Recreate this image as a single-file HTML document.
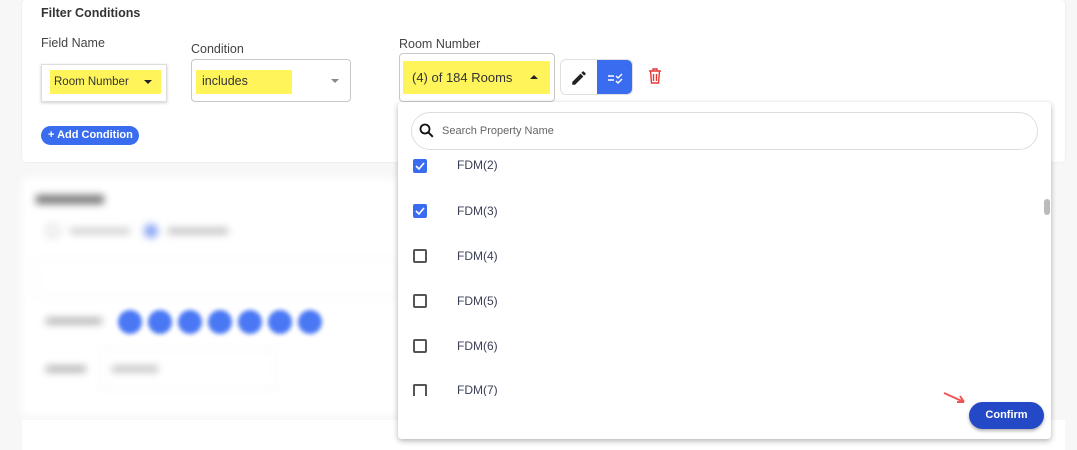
<!DOCTYPE html>
<html><head><style>
*{box-sizing:border-box;margin:0;padding:0}
html,body{width:1077px;height:441px}
body{background:#f7f7f8;font-family:"Liberation Sans",sans-serif;position:relative;overflow:hidden;color:#333}
.abs{position:absolute}
.card{background:#fff;border-radius:4px;box-shadow:0 0 2px rgba(0,0,0,.08)}
.lbl{font-size:12.5px;color:#444}
.sel{border:1px solid #c8c8c8;border-radius:4px;background:#fff}
.yel{background:#fff55a}
.cb{width:14px;height:14px;border-radius:2px}
.on{background:#3a6cf0}
.off{border:2px solid #555}
.item{font-size:12px;color:#3a3f55}
</style></head><body>
<div class="abs card" style="left:22px;top:0;width:1043px;height:162px"></div>
<div class="abs" style="left:41px;top:6px;font-size:12.5px;font-weight:bold;color:#333">Filter Conditions</div>
<div class="abs lbl" style="left:41px;top:36px">Field Name</div>
<div class="abs lbl" style="left:191px;top:42px">Condition</div>
<div class="abs lbl" style="left:399px;top:37px">Room Number</div>
<div class="abs" style="left:41px;top:64px;width:126px;height:38px;background:#fff;border:1px solid #ddd;box-shadow:0 1px 3px rgba(0,0,0,.2)"></div>
<div class="abs yel" style="left:50px;top:70px;width:111px;height:24px;font-size:11.5px;padding:6px 4px;color:#333">Room Number <span style="position:absolute;right:9px;top:10px;border:4px solid transparent;border-top:4px solid #222;border-bottom:0"></span></div>
<div class="abs sel" style="left:191px;top:59px;width:160px;height:43px"></div>
<div class="abs yel" style="left:196px;top:70px;width:96px;height:24px;font-size:12.5px;padding:4px 6px;color:#333">includes</div>
<div class="abs" style="left:331px;top:79px;border:4px solid transparent;border-top:4px solid #888;border-bottom:0"></div>
<div class="abs sel" style="left:399px;top:53px;width:156px;height:49px"></div>
<div class="abs yel" style="left:403px;top:61px;width:147px;height:33px;font-size:13px;padding:9px 9px;color:#333">(4) of 184 Rooms<span style="position:absolute;right:12px;top:14px;border:4px solid transparent;border-bottom:4px solid #222;border-top:0"></span></div>
<div class="abs" style="left:560px;top:59px;width:73px;height:36px;border:1px solid #e0e0e0;border-radius:6px;background:#fff;overflow:hidden">
<div class="abs" style="left:36px;top:0;width:37px;height:36px;background:#3a6cf0"></div>
<svg class="abs" style="left:9px;top:9px" width="18" height="18" viewBox="0 0 24 24"><path d="M3 17.25V21h3.75L17.81 9.94l-3.75-3.75L3 17.25zM20.71 7.04a1 1 0 000-1.41l-2.34-2.34a1 1 0 00-1.41 0l-1.830 1.83 3.75 3.75 1.83-1.83z" fill="#222"/></svg>
<svg class="abs" style="left:46px;top:10px" width="18" height="16" viewBox="0 0 18 16"><path d="M1 6h6M1 10h6M9 6l2 2 4-4M9 11l2 2 4-4" stroke="#fff" stroke-width="1.4" fill="none"/></svg>
</div>
<svg class="abs" style="left:648px;top:68px" width="14" height="16" viewBox="0 0 14 16"><path d="M1 3h12M5 3V1h4v2M2.5 3l1 12h7l1-12M5.5 6v7M8.5 6v7" stroke="#e53935" stroke-width="1.4" fill="none"/></svg>
<div class="abs" style="left:41px;top:126px;width:98px;height:19px;border-radius:10px;background:#3a6cf0;color:#fff;font-size:11px;font-weight:bold;padding:3px 0 0 7px">+ Add Condition</div>

<div class="abs" style="left:22px;top:178px;width:376px;height:238px;filter:blur(4px)">
<div class="abs" style="left:0;top:0;width:376px;height:238px;background:#fff"></div>
<div class="abs" style="left:14px;top:17px;width:68px;height:9px;background:#777"></div>
<div class="abs" style="left:24px;top:46px;width:14px;height:14px;border:2px solid #ccc;border-radius:7px"></div>
<div class="abs" style="left:48px;top:50px;width:60px;height:6px;background:#ccc"></div>
<div class="abs" style="left:122px;top:46px;width:14px;height:14px;background:#8aa6f5;border-radius:7px"></div>
<div class="abs" style="left:146px;top:50px;width:60px;height:6px;background:#bbb"></div>
<div class="abs" style="left:14px;top:80px;width:362px;height:40px;border:1px solid #f0f0f0"></div>
<div class="abs" style="left:24px;top:140px;width:56px;height:6px;background:#aaa"></div>
<div class="abs" style="left:24px;top:188px;width:40px;height:6px;background:#aaa"></div>
<div class="abs" style="left:78px;top:170px;width:176px;height:42px;border:1px solid #eee"></div>
<div class="abs" style="left:90px;top:188px;width:46px;height:6px;background:#bbb"></div>
</div>
<div class="abs" style="left:118px;top:310px;filter:blur(2px);display:flex;gap:6px">
<span style="width:24px;height:24px;border-radius:12px;background:#4a78f5"></span><span style="width:24px;height:24px;border-radius:12px;background:#4a78f5"></span><span style="width:24px;height:24px;border-radius:12px;background:#4a78f5"></span><span style="width:24px;height:24px;border-radius:12px;background:#4a78f5"></span><span style="width:24px;height:24px;border-radius:12px;background:#4a78f5"></span><span style="width:24px;height:24px;border-radius:12px;background:#4a78f5"></span><span style="width:24px;height:24px;border-radius:12px;background:#4a78f5"></span>
</div>
<div class="abs" style="left:22px;top:420px;width:1043px;height:30px;background:#fff"></div>

<div class="abs" style="left:398px;top:102px;width:653px;height:337px;background:#fff;border-radius:4px;box-shadow:0 2px 6px rgba(0,0,0,.3)">
<div class="abs" style="left:13px;top:10px;width:627px;height:38px;border:1px solid #ddd;border-radius:19px"></div>
<svg class="abs" style="left:21px;top:21px" width="15" height="15" viewBox="0 0 15 15"><circle cx="6" cy="6" r="4.5" stroke="#111" stroke-width="1.8" fill="none"/><path d="M9.3 9.3l4.5 4.5" stroke="#111" stroke-width="2"/></svg>
<div class="abs" style="left:44px;top:23px;font-size:11px;color:#666">Search Property Name</div>
<div class="abs" style="left:646px;top:97px;width:6px;height:16px;background:#bbb;border-radius:3px"></div>
</div>
<div class="abs cb on" style="left:413px;top:159px"><svg width="14" height="14"><path d="M3 7l3 3 5-6" stroke="#fff" stroke-width="1.6" fill="none"/></svg></div>
<div class="abs item" style="left:457px;top:158px">FDM(2)</div>
<div class="abs cb on" style="left:413px;top:204px"><svg width="14" height="14"><path d="M3 7l3 3 5-6" stroke="#fff" stroke-width="1.6" fill="none"/></svg></div>
<div class="abs item" style="left:457px;top:204px">FDM(3)</div>
<div class="abs cb off" style="left:413px;top:249px"></div><div class="abs item" style="left:457px;top:249px">FDM(4)</div>
<div class="abs cb off" style="left:413px;top:294px"></div><div class="abs item" style="left:457px;top:294px">FDM(5)</div>
<div class="abs cb off" style="left:413px;top:339px"></div><div class="abs item" style="left:457px;top:339px">FDM(6)</div>
<div class="abs" style="left:413px;top:384px;width:14px;height:12px;border:2px solid #555;border-bottom:none;border-radius:2px 2px 0 0"></div><div class="abs item" style="left:457px;top:383px">FDM(7)</div>
<div class="abs" style="left:398px;top:396px;width:653px;height:43px;background:#fff;border-radius:0 0 4px 4px"></div>
<svg class="abs" style="left:942px;top:390px" width="28" height="16"><path d="M2 3l20 9M22 12l-7 0M22 12l-4-6" stroke="#ee5555" stroke-width="2" fill="none"/></svg>
<div class="abs" style="left:969px;top:402px;width:75px;height:27px;border-radius:14px;background:#2449c7;color:#fff;font-size:11px;font-weight:bold;text-align:center;line-height:27px;box-shadow:0 2px 3px rgba(0,0,0,.3)">Confirm</div>
</body></html>
